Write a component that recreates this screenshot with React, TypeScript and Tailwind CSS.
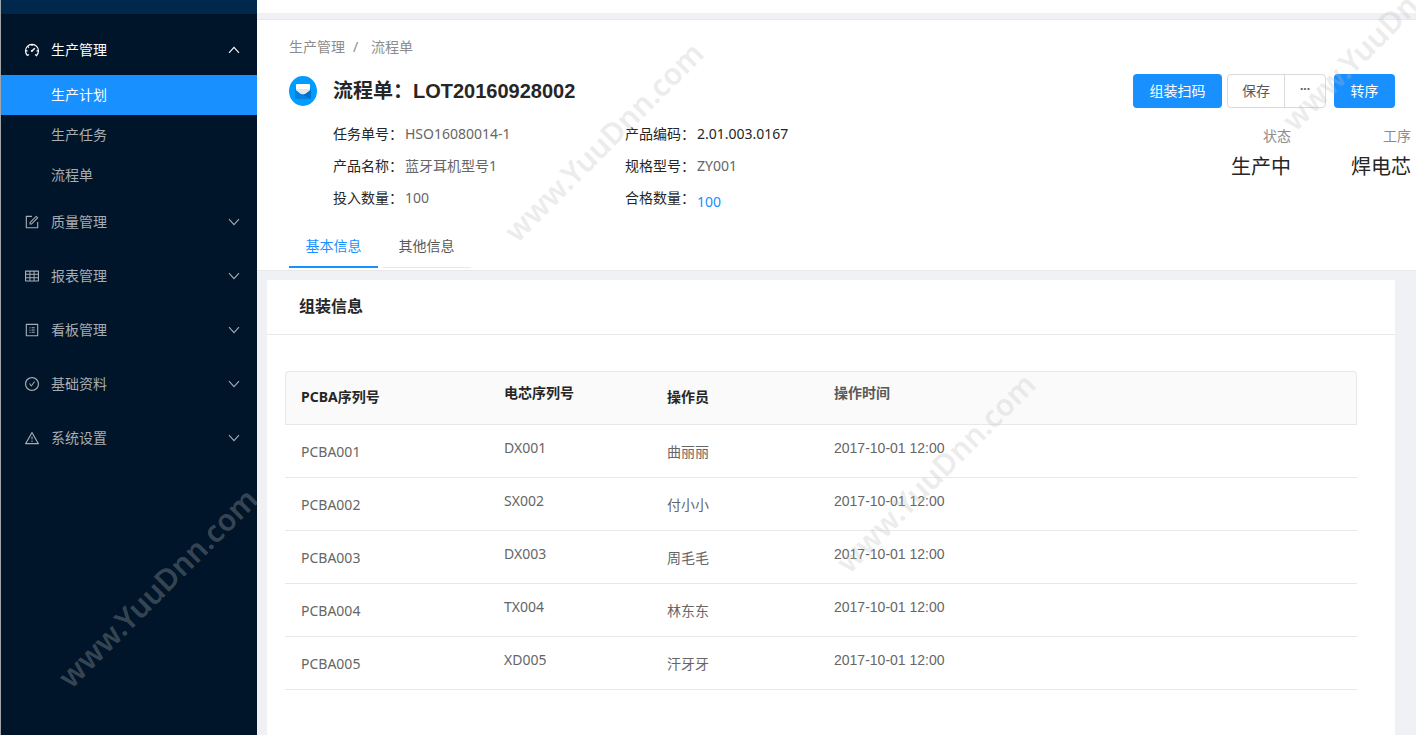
import { useState } from "react";
import {
  AiOutlineCheckCircle,
  AiOutlineForm,
  AiOutlineProfile,
  AiOutlineTable,
  AiOutlineWarning,
} from "react-icons/ai";
import type { ComponentType } from "react";
import clsx from "clsx";

type MenuGroup = {
  title: string;
  icon: ComponentType<{ size?: number }>;
  children?: string[];
};

function GaugeIcon({ size = 16 }: { size?: number }) {
  return (
    <svg
      width={size}
      height={size}
      viewBox="0 0 16 16"
      fill="none"
      stroke="currentColor"
      strokeWidth="1.2"
      aria-hidden="true"
    >
      <path d="M3.600 13.700A6.500 6.500 0 1 1 12.400 13.700L11.200 12.300M3.600 13.700 4.800 12.300" />
      <path d="M8 2.500v1.500M2 8.800h1.500M12.500 8.800H14M3.900 4.700l1 1" />
      <path d="M8 9 10.800 6.200" strokeWidth="1.500" />
      <circle cx="7.900" cy="9" r="1" fill="currentColor" stroke="none" />
    </svg>
  );
}

const MENU: MenuGroup[] = [
  {
    title: "生产管理",
    icon: GaugeIcon,
    children: ["生产计划", "生产任务", "流程单"],
  },
  { title: "质量管理", icon: AiOutlineForm },
  { title: "报表管理", icon: AiOutlineTable },
  { title: "看板管理", icon: AiOutlineProfile },
  { title: "基础资料", icon: AiOutlineCheckCircle },
  { title: "系统设置", icon: AiOutlineWarning },
];

const ROWS = [
  { pcba: "PCBA001", cell: "DX001", operator: "曲丽丽", time: "2017-10-01 12:00" },
  { pcba: "PCBA002", cell: "SX002", operator: "付小小", time: "2017-10-01 12:00" },
  { pcba: "PCBA003", cell: "DX003", operator: "周毛毛", time: "2017-10-01 12:00" },
  { pcba: "PCBA004", cell: "TX004", operator: "林东东", time: "2017-10-01 12:00" },
  { pcba: "PCBA005", cell: "XD005", operator: "汗牙牙", time: "2017-10-01 12:00" },
];

const TABS = ["基本信息", "其他信息"];

const WATERMARKS = [
  "left-[158px] top-[588px]",
  "left-[604px] top-[142px]",
  "left-[936px] top-[473px]",
  "left-[1382px] top-[31px]",
];

function Chevron({ up }: { up?: boolean }) {
  return (
    <svg
      width="12"
      height="8"
      viewBox="0 0 12 8"
      fill="none"
      stroke="currentColor"
      strokeWidth="1.1"
      aria-hidden="true"
      className={clsx("ml-auto", up && "rotate-180")}
    >
      <path d="M1 1.200 6 6.600 11 1.200" />
    </svg>
  );
}

function Sidebar() {
  const [open, setOpen] = useState("生产管理");
  const [active, setActive] = useState("生产计划");

  return (
    <aside className="w-[257px] shrink-0 border-l border-[#a0a4a8] bg-[#001529] text-[#a6adb4]">
      <div className="h-3.5 bg-[#00284d]" />
      <nav>
        {MENU.map(({ title, icon: Icon, children }, i) => {
          const expanded = open === title;
          return (
            <div key={title}>
              <button
                type="button"
                aria-expanded={expanded}
                onClick={() => setOpen(expanded ? "" : title)}
                className={clsx(
                  "flex w-full items-center gap-[11px] pr-[17px] pl-[23px]",
                  i === 0 ? "h-[61px] pt-2.5" : "h-[54px]",
                  expanded && "text-white",
                )}
              >
                <Icon size={16} />
                {title}
                <Chevron up={expanded} />
              </button>
              {expanded && children && (
                <ul>
                  {children.map((name) => (
                    <li key={name}>
                      <a
                        href="#"
                        onClick={() => setActive(name)}
                        className={clsx(
                          "flex h-10 items-center pl-[50px]",
                          active === name && "bg-[#1890ff] text-white",
                        )}
                      >
                        {name}
                      </a>
                    </li>
                  ))}
                </ul>
              )}
            </div>
          );
        })}
      </nav>
    </aside>
  );
}

function LotIcon() {
  return (
    <svg width="28" height="30" viewBox="0 0 28 30" aria-hidden="true" className="shrink-0">
      <ellipse cx="14" cy="15" rx="14" ry="15" fill="#009cff" />
      <path d="M6 13h16v9a1 1 0 0 1-1 1H7a1 1 0 0 1-1-1z" fill="#0075d1" />
      <path d="m6 14 8 5 8-5v8a1 1 0 0 1-1 1H7a1 1 0 0 1-1-1z" fill="#0083e0" />
      <path d="m14 19 8 3.500V14z" fill="#0070c9" />
      <path d="M7 9a1 1 0 0 1 1-1h12a1 1 0 0 1 1 1v5l-4.500 3.500Q14 19 11.500 17.500L7 14z" fill="#fff" />
      <path d="M7 13h14v1l-4.500 3.500Q14 19 11.500 17.500L7 14z" fill="#e4e6e8" />
    </svg>
  );
}

function Info({ label, value, valueClass }: { label: string; value: string; valueClass?: string }) {
  return (
    <div className="flex h-8 items-center">
      <dt className="text-[#262626]">{label}：</dt>
      <dd className={clsx("pl-0.5", valueClass ?? "text-[#666]")}>{value}</dd>
    </div>
  );
}

function Stat({ label, value }: { label: string; value: string }) {
  return (
    <div>
      <dt className="leading-5 text-[#8c8c8c]">{label}</dt>
      <dd className="text-xl leading-[42px] text-[#262626]">{value}</dd>
    </div>
  );
}

function PageHeader() {
  const [tab, setTab] = useState(TABS[0]);

  return (
    <header className="border-y border-[#e8e8e8] bg-white pt-4 pb-0.5 pl-8">
      <nav aria-label="breadcrumb" className="flex leading-[22px] text-[#8c8c8c]">
        <a href="#">生产管理</a>
        <span className="w-[26px] pl-2">/</span>
        <a href="#">流程单</a>
      </nav>

      <div className="mt-4 flex items-center justify-between pr-[21px]">
        <div className="flex items-center">
          <LotIcon />
          <h1 className="flex items-center pl-4 text-xl leading-7 font-bold text-[#262626]">
            <span>流程单：</span>
            <span className="font-['Liberation_Sans',sans-serif]">LOT20160928002</span>
          </h1>
        </div>
        <div className="flex">
          <button type="button" className="h-[34px] w-[89px] rounded bg-[#1890ff] text-white">
            组装扫码
          </button>
          <div className="mr-2 ml-[5px] flex h-[34px] rounded border border-[#d9d9d9] text-[#595959]">
            <button type="button" className="border-r border-[#d9d9d9] px-3.5">
              保存
            </button>
            <button type="button" aria-label="更多" className="w-10 pb-1 text-xs font-bold">
              ···
            </button>
          </div>
          <button type="button" className="h-[34px] w-[61px] rounded bg-[#1890ff] text-white">
            转序
          </button>
        </div>
      </div>

      <div className="mt-2.5 flex justify-between pr-[5px]">
        <dl className="grid grid-cols-[292px_auto] pl-11">
          <Info label="任务单号" value="HSO16080014-1" />
          <Info label="产品编码" value="2.01.003.0167" valueClass="text-[#262626]" />
          <Info label="产品名称" value="蓝牙耳机型号1" />
          <Info label="规格型号" value="ZY001" />
          <Info label="投入数量" value="100" />
          <Info label="合格数量" value="100" valueClass="pt-2 text-[#1890ff]" />
        </dl>
        <dl className="flex gap-[60px] pt-2 text-right">
          <Stat label="状态" value="生产中" />
          <Stat label="工序" value="焊电芯" />
        </dl>
      </div>

      <div role="tablist" className="mt-2.5 flex gap-1">
        {TABS.map((name) => (
          <button
            key={name}
            type="button"
            role="tab"
            aria-selected={tab === name}
            onClick={() => setTab(name)}
            className={clsx(
              "h-11 w-[89px]",
              tab === name
                ? "border-b-2 border-[#1890ff] pt-px text-[#1890ff]"
                : "border-b border-[#e8e8e8] text-[#595959]",
            )}
          >
            {name}
          </button>
        ))}
      </div>
    </header>
  );
}

function AssemblyCard() {
  return (
    <section className="mt-[9px] mr-[21px] ml-2.5 flex-1 bg-white">
      <h2 className="border-b border-[#e8e8e8] px-8 pt-3.5 pb-4 text-base font-bold text-[#262626]">
        组装信息
      </h2>
      <div className="pt-9 pr-[38px] pl-[18px]">
        <table className="w-full table-fixed border-separate border-spacing-0 text-left text-[#666]">
          <thead className="bg-[#fafafa] text-[#262626]">
            <tr className="h-[54px] *:border-y *:border-[#e8e8e8]">
              <th className="w-[203px] rounded-tl border-l pb-0.5 pl-[15px]">PCBA序列号</th>
              <th className="w-[163px] pb-2.5 pl-4">电芯序列号</th>
              <th className="w-[167px] pb-0.5 pl-4">操作员</th>
              <th className="rounded-tr border-r pb-2.5 pl-4 text-[#595959]">操作时间</th>
            </tr>
          </thead>
          <tbody>
            {ROWS.map((row) => (
              <tr key={row.pcba} className="h-[53px] *:border-b *:border-[#e8e8e8] *:pl-4">
                <td className="pt-0.5">{row.pcba}</td>
                <td className="pb-1.5">{row.cell}</td>
                <td className="pt-0.5">{row.operator}</td>
                <td className="pb-1.5 font-['Liberation_Sans',sans-serif]">{row.time}</td>
              </tr>
            ))}
          </tbody>
        </table>
      </div>
    </section>
  );
}

function Watermark() {
  return (
    <div
      aria-hidden="true"
      className="pointer-events-none absolute inset-0 overflow-hidden text-[30px] font-semibold text-[#bebebe]/30"
    >
      {WATERMARKS.map((place) => (
        <span
          key={place}
          className={clsx("absolute -translate-x-1/2 -translate-y-1/2 -rotate-45 whitespace-nowrap", place)}
        >
          www.YuuDnn.com
        </span>
      ))}
    </div>
  );
}

export default function App() {
  return (
    <div className="relative flex min-h-screen bg-[#eff1f5] font-['Noto_Sans','Noto_Sans_CJK_SC',sans-serif] text-sm">
      <Sidebar />
      <main className="flex min-w-0 flex-1 flex-col">
        <div className="mb-1.5 h-[13px] bg-white" />
        <PageHeader />
        <AssemblyCard />
      </main>
      <Watermark />
    </div>
  );
}
